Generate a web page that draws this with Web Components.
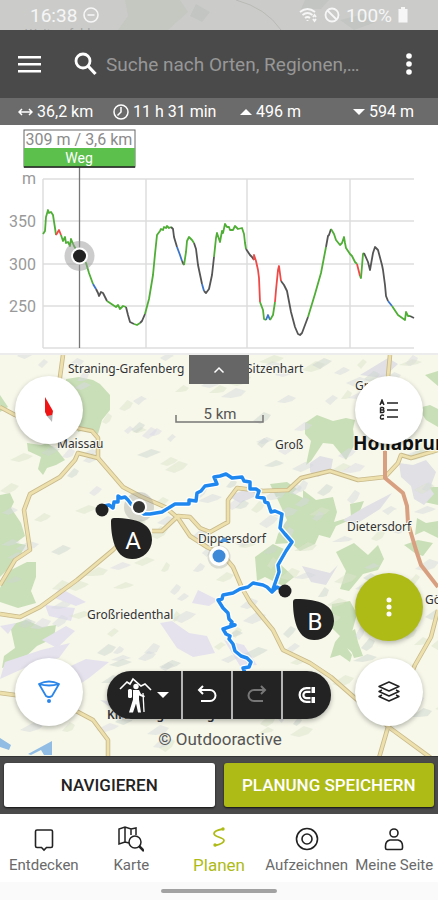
<!DOCTYPE html>
<html lang="de">
<head>
<meta charset="utf-8">
<meta name="viewport" content="width=device-width, initial-scale=1">
<title>Tourenplaner</title>
<style>
    html, body { margin: 0; height: 100%; }
    body {
        font-family: Roboto, "Liberation Sans", sans-serif;
        --dark: #4a4a4a;
        --ink: #232323;
        --accent: #aebb16;
        --route: #1e88f0;
    }
</style>
</head>
<body>
<planner-app></planner-app>

<script>
/* small helper: every element here is a template cloned into an open root */
function define( name, html, setup ) {
    const template = document.createElement('template');
    template.innerHTML = html;
    customElements.define( name, class extends HTMLElement {
        constructor() {
            super();
            this.attachShadow({ mode: 'open' }).appendChild( template.content.cloneNode( true ) );
            if( setup )
                setup( this.shadowRoot );
        }
    });
}

/* status bar of the phone, map shines through */
define( 'status-bar', `
    <style>
        :host {
            display: flex;
            justify-content: space-between;
            align-items: center;
            position: relative;
            overflow: hidden;
            height: 30px;
            padding: 0 30px;
            box-sizing: border-box;
            background: #cbccca;
            color: #f6f6f6;
            font-size: 19px;
        }
        .bg { position: absolute; left: 0; top: 0; width: 100%; height: 100%; }
        .group { display: flex; align-items: center; gap: 6px; position: relative; }
        svg { display: block; fill: none; stroke: currentColor; }
    </style>
    <svg class="bg" viewBox="0 0 438 30" preserveAspectRatio="none" aria-hidden="true">
        <path d="M125 0h55l8 12-20 18h-50l10-14z" fill="#c4c8c1" stroke="none"/>
        <path d="M305 0h24l-8 9h-20zM196 4l14 8-8 10-12-6zM340 20l24-6 12 8-22 8z" fill="#c2c5c2" stroke="none"/>
        <path d="M236 0q30 8 45 30" stroke="#b9b9b5" stroke-width="1"/>
        <text x="25" y="38" font-size="13" fill="#a4a5a3" stroke="none">Weitersfeld</text>
    </svg>
    <div class="group">
        <span>16:38</span>
        <svg width="16" height="16" viewBox="0 0 16 16" stroke-width="1.6"><circle cx="8" cy="8" r="7"/><path d="M4.500 8h7"/></svg>
    </div>
    <div class="group">
        <svg width="19" height="16" viewBox="0 0 19 16" stroke-width="1.8"><path d="M1 5q7.500-6 15 0M3.500 8q5-4 10 0M6 11q2.500-2 5 0"/><path d="M8.500 13v1M14 12l1.500 2 1.500-2M14 10l1.500-2 1.500 2"/></svg>
        <svg width="16" height="16" viewBox="0 0 16 16" stroke-width="1.800"><circle cx="8" cy="8" r="6.500"/><path d="M3.500 3.500l9 9"/></svg>
        <span>100%</span>
        <svg width="10" height="16" viewBox="0 0 10 16"><path d="M3 0h4v2h2.500v13.500h-9V2H3z" fill="currentColor" stroke="none"/></svg>
    </div>
` );

define( 'search-header', `
    <style>
        :host {
            display: flex;
            align-items: center;
            height: 68px;
            padding: 0 14px 0 18px;
            box-sizing: border-box;
            background: var(--dark);
            color: #fff;
        }
        button { border: 0; padding: 0; background: none; color: inherit; }
        svg { display: block; }
        label { display: flex; flex: 1; min-width: 0; align-items: center; gap: 9px; margin-left: 32px; }
        input {
            flex: 1;
            min-width: 0;
            border: 0;
            padding: 0;
            outline: 0;
            background: none;
            color: #fff;
            font: inherit;
            font-size: 19px;
        }
        input::placeholder { color: #979797; opacity: 1; }
    </style>
    <button aria-label="Menü"><svg width="24" height="18" viewBox="0 0 24 18" fill="currentColor"><path d="M0 1h23v2.500H0zM0 8h23v2.500H0zM0 15h23v2.500H0z"/></svg></button>
    <label>
        <svg width="23" height="24" viewBox="0 0 23 24" fill="none" stroke="currentColor" stroke-width="2.800" aria-hidden="true"><circle cx="9" cy="9" r="7"/><path d="M14 14l7.500 8" stroke-width="3.200"/></svg>
        <input type="text" aria-label="Suche" placeholder="Suche nach Orten, Regionen,…">
    </label>
    <button aria-label="Mehr"><svg width="30" height="24" viewBox="0 0 30 24" fill="currentColor"><circle cx="15" cy="4" r="2.800"/><circle cx="15" cy="12" r="2.800"/><circle cx="15" cy="20" r="2.800"/></svg></button>
` );

define( 'tour-stats', `
    <style>
        :host {
            display: grid;
            grid-template-columns: 95fr 127fr 113fr 85fr;
            align-items: center;
            height: 27px;
            padding-left: 18px;
            background: #6b6b6b;
            color: #fff;
            font-size: 16px;
            white-space: nowrap;
        }
    </style>
    <slot></slot>
` );

const statIcons = {
    distance: '<svg width="15" height="14" viewBox="0 0 15 14"><path d="M1 7h13M4 4L1 7l3 3M11 4l3 3-3 3" fill="none" stroke="currentColor" stroke-width="1.500"/></svg>',
    time: '<svg width="16" height="16" viewBox="0 0 16 16"><path d="M8 3v5l-3.500 3.500M8 1a7 7 0 1 0 0 14a7 7 0 1 0 0-14z" fill="none" stroke="currentColor" stroke-width="1.500"/></svg>',
    up: '<svg width="12" height="14" viewBox="0 0 12 14"><path d="M0 10l6-6 6 6z" fill="currentColor"/></svg>',
    down: '<svg width="12" height="14" viewBox="0 0 12 14"><path d="M0 4l6 6 6-6z" fill="currentColor"/></svg>'
};

define( 'tour-stat', `
    <style>
        :host { display: flex; align-items: center; gap: 4px; }
        svg { display: block; }
    </style>
    <span class="icon"></span>
    <span><slot></slot></span>
` );

/* elevation profile, coloured by way type */
define( 'elevation-chart', `
    <style>
        :host { display: block; background: #fff; border-bottom: 2px solid #ececec; }
        svg { display: block; width: 100%; }
        .grid { fill: none; stroke: #dedede; stroke-width: 1.500; }
        .axis { fill: #999; font-size: 16px; text-anchor: end; }
        .way path { fill: none; stroke-width: 1.800; stroke-linejoin: round; }
    </style>
    <svg viewBox="0 125 438 228" role="img" aria-label="Höhenprofil">
        <path class="grid" d="M43 179H414M43 221H414M43 264H414M43 306H414M43 348H414M43 179V348M146 179V348M247 179V348M350 179V348"/>
        <g class="axis">
            <text x="36" y="184">m</text>
            <text x="36" y="227">350</text>
            <text x="36" y="270">300</text>
            <text x="36" y="312">250</text>
        </g>
        <g class="way"></g>
        <path d="M79.500 167V348" stroke="#777" stroke-width="1.300"/>
        <circle cx="79.500" cy="256" r="15" fill="#999" fill-opacity=".5"/>
        <circle cx="79.500" cy="256" r="8.500" fill="#fff"/>
        <circle cx="79.500" cy="256" r="6.500" fill="#222"/>
        <rect x="24" y="130" width="111" height="37" fill="#fff" stroke="#666"/>
        <rect x="24" y="148" width="111" height="19" fill="#5cc04c"/>
        <path d="M24 167H135" stroke="#222" stroke-width="1.500"/>
        <text x="79" y="145" font-size="16" fill="#8b8b8b" text-anchor="middle">309 m / 3,6 km</text>
        <text x="79" y="163" font-size="14" fill="#fff" text-anchor="middle">Weg</text>
    </svg>
`, root => {
    const colors = { g: '#4fae35', k: '#555', b: '#3c74c8', r: '#ee4a48' };
    const segments = [
        ['g', '43,234 45,231 46,217 48,210 49,213 51,212 53,215 55,228 56,235'],
        ['r', '56,235 59,230 61,235'],
        ['g', '61,235 63,241 65,237 66,243 68,242 70,246 71,239 74,246 79,254 86,263 89,273 93,284'],
        ['b', '93,284 96,289'],
        ['k', '96,289 98,293 99,296 101,292 103,293 105,297 107,301'],
        ['g', '107,301 110,303 113,305 116,307 118,305 120,309 123,306 126,307'],
        ['k', '126,307 128,315 130,322 134,324'],
        ['g', '134,324 137,325 140,323'],
        ['k', '140,323 142,321 145,314'],
        ['g', '145,314 149,299 153,275 155,254 157,235 160,231 161,229 163,230 164,227 166,228 167,226 169,228 171,227'],
        ['k', '171,227 173,229 174,237 177,247'],
        ['b', '177,247 180,255 182,261'],
        ['k', '182,261 184,265'],
        ['g', '184,265 186,252 187,241 189,237 192,240 194,243'],
        ['k', '194,243 196,249 198,265 202,284'],
        ['b', '202,284 204,291'],
        ['k', '204,291 206,293 209,289 212,275 214,257'],
        ['g', '214,257 216,238 217,233 220,242 222,231 223,233 225,224 227,227 229,227 230,230 233,230 235,226 238,229 242,228 244,234 245,243 246,249'],
        ['k', '246,249 250,255 252,257 254,260'],
        ['r', '254,260 254,255 256,261 258,270 259,278 260,302'],
        ['g', '260,302 263,310 264,319 266,320'],
        ['b', '266,320 268,315 270,320'],
        ['g', '270,320 273,315 275,302'],
        ['r', '275,302 276,290 278,270 279,266 281,281'],
        ['k', '281,281 284,285 287,291 291,312 295,327 298,334 300,335 302,333 308,317'],
        ['g', '308,317 315,294 321,273 326,247'],
        ['k', '326,247 328,236 329,235 331,229'],
        ['g', '331,229 334,234 336,240 340,245 342,243 344,237 345,243 346,248 350,254 352,256 355,262 357,264'],
        ['r', '357,264 360,276'],
        ['g', '360,276 361,278 363,254 364,253'],
        ['k', '364,253 368,262 370,270 373,253 375,247 378,250 382,265 383,270 385,285 386,296 388,301'],
        ['b', '388,301 392,306'],
        ['g', '392,306 398,315 405,320 406,312 408,316 410,316'],
        ['k', '410,316 414,318']
    ];
    root.querySelector('.way').innerHTML = segments
        .map( ([type, points]) => `<path d="M${points.replaceAll( ' ', 'L' )}" stroke="${colors[type]}"/>` )
        .join('');
});

/* the map itself: terrain, roads, route, labels. Controls come in through the slot */
define( 'tour-map', `
    <style>
        :host { display: block; position: relative; overflow: hidden; background: #f7f8ea; }
        .canvas { position: absolute; width: 100%; height: 100%; }
        .controls { position: absolute; inset: 0; }
        .forest { fill: #c9dfb7; }
        .field { fill: #e5e2ee; }
        .village { fill: #e0e0e5; }
        .water { fill: #91bde5; }
        .edge { fill: none; stroke: #c8b98a; stroke-width: 4.500; stroke-linejoin: round; }
        .road { fill: none; stroke: #eee0ad; stroke-width: 2.800; stroke-linejoin: round; }
        .main { fill: none; stroke: #d8a080; stroke-width: 4; stroke-linejoin: round; }
        .label {
            font-family: "Noto Sans", sans-serif;
            font-size: 12px;
            fill: #333;
            paint-order: stroke;
            stroke: #f8f9ef;
            stroke-width: 2px;
        }
        .town { font-size: 19px; font-weight: 700; fill: #111; }
        .halo { fill: none; stroke: #fff; stroke-width: 6; stroke-linejoin: round; }
        .route { fill: none; stroke: var(--route); stroke-width: 3.500; stroke-linejoin: round; }
        .pin { fill: #fff; font-size: 24px; text-anchor: middle; }
    </style>
    <svg class="canvas" viewBox="0 355 438 401" preserveAspectRatio="xMidYMid slice" role="img" aria-label="Karte">
        <path class="forest" d="M66 379l13-2 14 3 7 4 10 11v15l-8 10-4 14-10-5-10 3-2-11-11-4zM27 443l14 2 6-2 10 7 8 10-9 5-9 3-4 7-5-6 3-12-13-6zM0 495l10-2 4 9-3 6 10 15 4 13-12 9-13 6z"/>
        <path class="forest" d="M7 572l20-10 9 0 0 15-5 14 5 12-18 5-18-6v-14zM10 625l16-5 16 7 14-2-2 13-17 8-15 14-20 8 2-12 11-8zM0 548l12-6 14 3-8 14-18 18z"/>
        <path class="forest" d="M305 423l12-8 16 6 13-3 9 2-2 9 2 15-9 16-13-16-10-1-12 18-5 4 5-24-6-7zM277 498l12-7 14 7 0-8 13 10 17-3 4 15-3 10 17-5-1-13 14-3-4 10-10 9-14 6-6 12-11-3-4 9-15 7-9-8-16 1 3-10 9-14z"/>
        <path class="forest" d="M255 557l18-13 11 5-4 15 14 13-11 9-18-9-8 4zM270 484l17-2 10 7-7 6-14 2zM336 552l18-9 14 12 10-10 6 14-6 11-15 4-14 17-9-2 6-18zM332 604l18-3 7 13-5 18 5 10-5 10-5-4 5 7-2 7-10-7-10 3 5-16 5-6-10-10z"/>
        <path class="forest" d="M415 483l11 4 12 0v18l-14-3-11-7zM417 518l9 5 12-2v17l-14-7-9 4zM418 408l12-3 8 4v18l-12-7zM404 545l14-5 15 3-10 13-7-2zM425 375l13-4v15zM345 635l10-6 3 13 5 14-9 2zM0 395l8 12-8 5z"/>
        <path class="field" d="M45 605l30 3-4 13-22-5zM60 588l26 14-10 4-24-9zM160 623l12-2 17 12 18 3 8 17-22 4-16-9zM62 670l24-11 23 3-20 16-12 8zM5 662l36-12 29-7-11 15-30 8-29 13zM42 640l24-14 9 5-18 17zM224 640l20 5 13 20-17 1zM0 626l16-3-8 11zM198 590l20 10-9 6-17-3z"/>
        <path class="village" d="M399 463l14 2 13-5 10 12-6 16 4 6-10 11-10-6-3-13-10-9zM310 463l10-7 13 3-2 11-13 7-8-5zM343 520l22-13 27-14-12 16-27 17zM228 496l22-8 8 7-18 8zM360 375l28-17 10 6-15 14zM100 700l34 4 9 14-25-5zM302 566l28 7 8-8-12 20-15-3z"/>
        <g class="shade"></g>
        <path class="water" d="M0 738l11 7-2 5-9-3zM28 754l24-13v14h-8l-3-5-10 5z"/>
        <g class="roads"></g>
        <path class="main" d="M385 450V478L403 493L407 506L408 523L416 550L421 565L438 587"/>
        <text class="label" x="68" y="373">Straning-Grafenberg</text>
        <text class="label" x="246" y="373">Sitzenhart</text>
        <text class="label" x="355" y="390">Grabern</text>
        <text class="label" x="57" y="448">Maissau</text>
        <text class="label" x="275" y="449">Groß</text>
        <text class="label town" x="353" y="450">Hollabrunn</text>
        <text class="label" x="347" y="531">Dietersdorf</text>
        <text class="label" x="198" y="543">Dippersdorf</text>
        <text class="label" x="87" y="619">Großriedenthal</text>
        <text class="label" x="425" y="604">Göllersdorf</text>
        <text class="label" x="107" y="719" font-weight="600">Kirchberg am Wagram</text>
        <circle cx="139" cy="507" r="15" fill="#999" fill-opacity=".35"/>
        <g class="track"></g>
        <circle cx="102" cy="510" r="6.500" fill="#222"/>
        <circle cx="139" cy="507" r="8" fill="#fff"/>
        <circle cx="139" cy="507" r="6" fill="#333"/>
        <circle cx="285" cy="591" r="6.500" fill="#222"/>
        <path d="M219 542l5-5 5 5z" fill="#4a90d9"/>
        <circle cx="219" cy="557" r="11.500" fill="#888" fill-opacity=".25"/>
        <circle cx="219" cy="556" r="10" fill="#fff"/>
        <circle cx="219" cy="556" r="6.500" fill="#3f8ad8"/>
        <path d="M111 521q0-3 3-3C138 518 152 524 152 540a19.500 19.500 0 0 1-20 19C117 559 111 542 111 521z" fill="#222"/>
        <path d="M293 602q0-3 3-3C320 599 334 605 334 621a19.500 19.500 0 0 1-20 19C299 640 293 623 293 602z" fill="#222"/>
        <text class="pin" x="133" y="549">A</text>
        <text class="pin" x="315" y="630">B</text>
        <path d="M176 415v7h87v-7" fill="none" stroke="#777" stroke-width="1.500"/>
        <text x="220" y="419" font-size="15" fill="#555" text-anchor="middle">5 km</text>
        <text x="220" y="745" font-size="17" fill="#555" text-anchor="middle">© Outdooractive</text>
    </svg>
    <div class="controls"><slot></slot></div>
`, root => {
    const roads = [
        'M63 355L60 377L58 400',
        'M0 407L15 415L40 425L77 428L92 431L98 438L98 458L78 453L75 460L60 477L30 494L24 510L30 550L15 560L0 585',
        'M98 458L123 487L140 496L165 507L178 518L190 536L207 547L223 555L233 567L242 588L250 602L273 630L283 650L310 663L331 677L355 698L390 728L431 758',
        'M152 531L162 531L178 516L190 517L200 528L210 532L228 522L228 500L237 488L263 491L288 490L301 478L330 471L358 480L385 477L398 463L401 455L411 458L438 450',
        'M118 545L113 550L77 580L40 607L20 617L0 614',
        'M0 693L15 695L50 700L78 712L93 720L108 740V758',
        'M438 610L431 637L415 665L400 700L388 727L379 758',
        'M390 355L388 377L386 420V450'
    ];
    root.querySelector('.roads').innerHTML =
        roads.map( d => `<path class="edge" d="${d}"/>` ).join('') +
        roads.map( d => `<path class="road" d="${d}"/>` ).join('');

    const track = 'M102 510L104 506L109 505L113 508L114 502L118 502V496L121 498L125 497L128 500L131 504L139 511L144 514L150 514L162 512L175 504L189 504V500L196 501L197 493L201 491L205 486L217 484L214 477L220 476L226 474L232 478L242 477L244 481L250 482V489L256 489L259 491L257 497L264 498L265 502L268 503L271 512L275 511L282 514L280 528L285 534L292 542L286 551L278 565L279 572L272 592L277 587L285 591M272 592L267 587L263 585L253 583L248 587L240 589L233 593L223 595L222 599L218 600L223 608L228 613L229 619L232 622L231 624L235 625L223 629L226 634L230 636L229 639L233 644L235 651L241 656L247 658L251 662L249 667L243 668L246 675';
    root.querySelector('.track').innerHTML = `<path class="halo" d="${track}"/><path class="route" d="${track}"/>`;

    // hill shading: small tilted flecks, fixed seed so the terrain stays the same
    let seed = 71;
    const rnd = n => {
        seed = ( seed * 16807 ) % 2147483647;
        return Math.round( seed / 2147483647 * n );
    };
    const tints = ['#cdd6d0', '#d5dade', '#dbe4cb', '#dcdae6'];
    let shade = '';
    for( let i = 0; i < 210; i++ ) {
        const x = rnd( 438 ), y = 356 + rnd( 398 ), w = 9 + rnd( 16 ), h = 2 + rnd( 5 );
        shade += `<path d="M${x} ${y}L${x + w * .6} ${y - h - 3}L${x + w} ${y - h}L${x + w * .8} ${y - 1}L${x + w * .4} ${y + rnd( 4 )}z" fill="${tints[rnd( 3 )]}" fill-opacity=".5"/>`;
    }
    root.querySelector('.shade').innerHTML = shade;
});

define( 'map-controls', `
    <style>
        :host {
            display: flex;
            justify-content: space-between;
            height: 100%;
            padding: 21px 15px 30px;
            box-sizing: border-box;
        }
        div { display: flex; flex-direction: column; justify-content: space-between; }
        div.bottom { gap: 17px; }
        div.center { justify-content: flex-end; padding-bottom: 7px; }
        ::slotted([slot="handle"]) {
            position: absolute;
            top: 0;
            left: 50%;
            transform: translateX(-50%);
        }
    </style>
    <slot name="handle"></slot>
    <div><slot name="left"></slot></div>
    <div class="center"><slot name="center"></slot></div>
    <div>
        <slot name="right"></slot>
        <div class="bottom"><slot name="right-bottom"></slot></div>
    </div>
` );

define( 'round-button', `
    <style>
        :host { display: block; }
        button {
            display: grid;
            place-items: center;
            width: 68px;
            height: 68px;
            padding: 0;
            border: 0;
            border-radius: 50%;
            background: #fff;
            color: #222;
            box-shadow: 0 2px 5px rgba(0, 0, 0, .28);
        }
        :host([primary]) button { background: var(--accent); color: #fff; }
    </style>
    <button><slot></slot></button>
` );

define( 'panel-handle', `
    <style>
        :host { display: block; }
        button {
            display: grid;
            place-items: center;
            width: 60px;
            height: 29px;
            border: 0;
            padding: 0;
            background: #666;
            color: #fff;
        }
    </style>
    <button aria-label="Höhenprofil einklappen"><svg width="12" height="8" viewBox="0 0 12 8" fill="none" stroke="currentColor" stroke-width="1.500"><path d="M1.500 6.500L6 2l4.500 4.500"/></svg></button>
` );

define( 'edit-toolbar', `
    <style>
        :host {
            display: grid;
            grid-template-columns: 74px 48px 48px 48px;
            gap: 2px;
            height: 48px;
            overflow: hidden;
            border-radius: 24px;
            background: #b5b5b5;
            box-shadow: 0 2px 5px rgba(0, 0, 0, .3);
        }
        button {
            display: flex;
            align-items: center;
            justify-content: center;
            gap: 4px;
            padding: 0;
            border: 0;
            background: var(--ink);
            color: #fff;
        }
        button:first-child { padding-left: 4px; }
        button:disabled { color: #777; }
        svg { display: block; fill: none; stroke: currentColor; stroke-width: 2; }
    </style>
    <button aria-label="Wandern" aria-haspopup="menu">
        <svg width="34" height="38" viewBox="0 0 34 38">
            <path d="M1 13L8 6l3 2 3-5 8 7 4-2 6 6" stroke-width="1.600"/>
            <circle cx="17" cy="10.500" r="2.700" fill="currentColor" stroke="none"/>
            <path d="M14 14h6l2 4 4 2-1 1.500-5-2v4l2 13h-3l-2-9-3 9h-4l4-13z" fill="currentColor" stroke="none"/>
            <rect x="9" y="13" width="4" height="9" rx="1.500" fill="currentColor" stroke="none"/>
            <path d="M24 17l1 19" stroke-width="1.300"/>
        </svg>
        <svg width="12" height="8" viewBox="0 0 12 8"><path d="M0 1h12L6 7z" fill="currentColor" stroke="none"/></svg>
    </button>
    <button aria-label="Rückgängig"><svg width="22" height="22" viewBox="0 0 22 22"><path d="M7 2L3 6l4 4M3 6h11a5 5 0 0 1 0 11H5"/></svg></button>
    <button aria-label="Wiederholen" disabled><svg width="22" height="22" viewBox="0 0 22 22"><path d="M15 2l4 4-4 4M19 6H8a5 5 0 0 0 0 11h9"/></svg></button>
    <button aria-label="Magnet">
        <svg width="20" height="20" viewBox="0 0 20 20">
            <path d="M18 5H9.500a5 5 0 0 0 0 10H18" stroke-width="6"/>
            <path d="M14 5H9.500a5 5 0 0 0 0 10H14" stroke="#232323" stroke-width="1.500"/>
            <path d="M14 2v6M14 12v6" stroke="#232323" stroke-width="1"/>
        </svg>
    </button>
` );

define( 'plan-actions', `
    <style>
        :host {
            display: grid;
            grid-template-columns: 1fr 1fr;
            gap: 9px;
            height: 58px;
            padding: 6px 4px 7px;
            box-sizing: border-box;
            background: var(--dark);
            border-top: 1px solid #333;
        }
        button {
            border: 0;
            border-radius: 3px;
            padding: 0;
            background: #fff;
            color: #222;
            font: inherit;
            font-size: 17px;
            font-weight: 500;
            box-shadow: 0 1px 2px #111;
            white-space: nowrap;
        }
        .save { background: var(--accent); color: #fff; }
    </style>
    <button>NAVIGIEREN</button>
    <button class="save">PLANUNG SPEICHERN</button>
` );

define( 'tab-bar', `
    <style>
        :host { display: block; background: #fafafa; }
        nav {
            display: grid;
            grid-template-columns: repeat(5, 1fr);
            height: 68px;
            background: #fff;
        }
        .pill { width: 116px; height: 4px; margin: 7px auto; border-radius: 2px; background: #a2a2a2; }
    </style>
    <nav><slot></slot></nav>
    <div class="pill"></div>
` );

define( 'tab-item', `
    <style>
        :host { display: block; }
        a {
            display: flex;
            flex-direction: column;
            align-items: center;
            gap: 3px;
            padding-top: 12px;
            color: #6a6a6a;
            font-size: 15px;
            line-height: 20px;
            text-decoration: none;
            white-space: nowrap;
        }
        :host([active]) a { color: var(--accent); font-size: 17px; }
        ::slotted(svg) { display: block; color: #222; fill: none; stroke: currentColor; }
        :host([active]) ::slotted(svg) { color: var(--accent); }
    </style>
    <a href="#"><slot name="icon"></slot><span><slot></slot></span></a>
` );

define( 'planner-app', `
    <style>
        :host { display: flex; flex-direction: column; min-height: 100vh; background: #fff; }
        tour-map { flex: 1; min-height: 380px; }
        svg { display: block; }
    </style>
    <status-bar></status-bar>
    <search-header></search-header>
    <tour-stats>
        <tour-stat icon="distance">36,2 km</tour-stat>
        <tour-stat icon="time">11 h 31 min</tour-stat>
        <tour-stat icon="up">496 m</tour-stat>
        <tour-stat icon="down">594 m</tour-stat>
    </tour-stats>
    <elevation-chart></elevation-chart>
    <tour-map>
        <map-controls>
            <panel-handle slot="handle"></panel-handle>
            <round-button slot="left" label="Norden">
                <svg width="24" height="28" viewBox="0 0 24 28"><path d="M9 19l7-4-1 11z" fill="#b8b8b8"/><path d="M8 1l8 14-1 4-5 1-2-4z" fill="#f01414"/></svg>
            </round-button>
            <round-button slot="left" label="Standort">
                <svg width="26" height="26" viewBox="0 0 26 26" fill="none" stroke="#2b86ea" stroke-width="1.800"><path d="M3 5q10-5 20 0l-7 12q-3 2-6 0zM3 5q10 3 20 0" stroke-linejoin="round"/><circle cx="13" cy="22" r="2" fill="#2b86ea" stroke="none"/></svg>
            </round-button>
            <edit-toolbar slot="center"></edit-toolbar>
            <round-button slot="right" label="Legende">
                <svg width="20" height="22" viewBox="0 0 20 22" fill="none" stroke="#222" stroke-width="1.400"><path d="M8 4h11M8 11h11M8 18h11"/><path d="M1 6l2-5 2 5M2 4h2M1.500 8.500v5h2q1.500 0 1.500-1.300T3.500 11h-2M1.500 8.500h2q1.300 0 1.300 1.200T3.500 11M5 16.500q-3-1.500-3.500 1.500T5 19.500"/></svg>
            </round-button>
            <round-button slot="right-bottom" primary label="Optionen">
                <svg width="8" height="22" viewBox="0 0 8 22" fill="currentColor"><circle cx="4" cy="4" r="2.500"/><circle cx="4" cy="11" r="2.500"/><circle cx="4" cy="18" r="2.500"/></svg>
            </round-button>
            <round-button slot="right-bottom" label="Karteninhalte">
                <svg width="24" height="24" viewBox="0 0 24 24" fill="none" stroke="#222" stroke-width="1.500" stroke-linejoin="round"><path d="M12 2l10 4.500L12 11 2 6.500z"/><path d="M5 10l-3 1.500L12 16l10-4.500-3-1.500M5 15l-3 1.500L12 21l10-4.500-3-1.500"/></svg>
            </round-button>
        </map-controls>
    </tour-map>
    <plan-actions></plan-actions>
    <tab-bar>
        <tab-item><svg slot="icon" width="26" height="26" viewBox="0 0 26 26" stroke-width="1.600"><path d="M6 4h14a1.500 1.500 0 0 1 1.500 1.500V20a1.500 1.500 0 0 1-1.500 1.500h-4.500L13 24l-2.500-2.500H6A1.500 1.500 0 0 1 4.500 20V5.500A1.500 1.500 0 0 1 6 4z"/></svg>Entdecken</tab-item>
        <tab-item><svg slot="icon" width="26" height="26" viewBox="0 0 26 26" stroke-width="1.500"><path d="M18 9V2l-5 1-6-2-6 2v15l6-2 4 1M7 1v15M13 3v6"/><circle cx="17" cy="16" r="6"/><path d="M21 20l5 5" stroke-width="2.500"/></svg>Karte</tab-item>
        <tab-item active><svg slot="icon" width="26" height="26" viewBox="0 0 26 26" stroke-width="1.800"><path d="M17 3Q8 4.500 8 7.500c0 4 10 3.500 10 7q0 3-9 5"/><circle cx="17" cy="3" r="1.700" fill="currentColor" stroke="none"/><circle cx="9" cy="19" r="1.700" fill="currentColor" stroke="none"/></svg>Planen</tab-item>
        <tab-item><svg slot="icon" width="26" height="26" viewBox="0 0 26 26" stroke-width="1.600"><circle cx="13" cy="13" r="10.500"/><circle cx="13" cy="13" r="5"/></svg>Aufzeichnen</tab-item>
        <tab-item><svg slot="icon" width="26" height="26" viewBox="0 0 26 26" stroke-width="1.600"><circle cx="13" cy="7" r="4"/><path d="M9 14h8q4.500 1 4.500 6v2a1.500 1.500 0 0 1-1.500 1.500H6A1.500 1.500 0 0 1 4.500 22v-2q0-5 4.500-6z"/></svg>Meine Seite</tab-item>
    </tab-bar>
`, root => {
    root.querySelectorAll('tour-stat').forEach( el => {
        el.shadowRoot.querySelector('.icon').innerHTML = statIcons[el.getAttribute('icon')];
    });
    root.querySelectorAll('round-button').forEach( el => {
        el.shadowRoot.querySelector('button').setAttribute( 'aria-label', el.getAttribute('label') );
    });
});
</script>
</body>
</html>
